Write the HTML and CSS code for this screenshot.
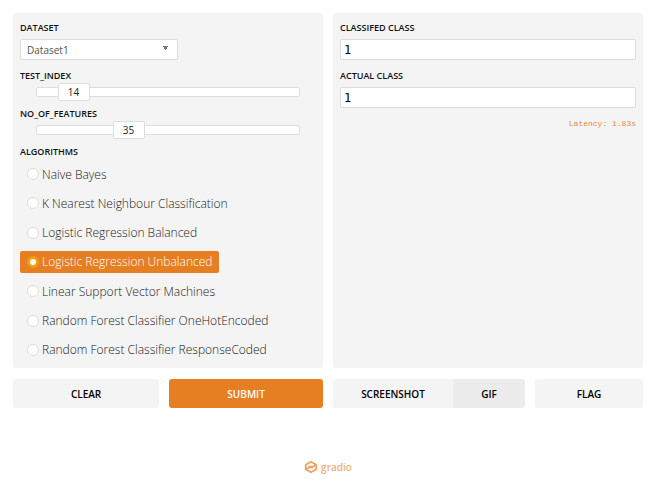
FILE: index.html
```html
<!DOCTYPE html>
<html lang="en">
<head>
<meta charset="utf-8">
<meta name="viewport" content="width=device-width, initial-scale=1">
<title>Gradio</title>
<link rel="stylesheet" href="styles.css">
</head>
<body>
<main class="interface">
  <form class="column" id="inputs">
    <div class="panel">
      <label class="label" for="dataset">DATASET</label>
      <select class="dropdown" id="dataset"><option>Dataset1</option></select>
      <label class="label" for="test-index">TEST_INDEX</label>
      <div class="slider">
        <input type="range" id="test-index" min="0" max="150" value="14">
        <output class="value" for="test-index" style="--ratio: 0.093">14</output>
      </div>
      <label class="label" for="features">NO_OF_FEATURES</label>
      <div class="slider">
        <input type="range" id="features" min="0" max="106" value="35">
        <output class="value" for="features" style="--ratio: 0.33">35</output>
      </div>
      <div class="label" id="algorithms">ALGORITHMS</div>
      <div class="options" role="radiogroup" aria-labelledby="algorithms">
        <label class="option"><input type="radio" name="algorithm">Naive Bayes</label>
        <label class="option"><input type="radio" name="algorithm">K Nearest Neighbour Classification</label>
        <label class="option"><input type="radio" name="algorithm">Logistic Regression Balanced</label>
        <label class="option"><input type="radio" name="algorithm" checked>Logistic Regression Unbalanced</label>
        <label class="option"><input type="radio" name="algorithm">Linear Support Vector Machines</label>
        <label class="option"><input type="radio" name="algorithm">Random Forest Classifier OneHotEncoded</label>
        <label class="option"><input type="radio" name="algorithm">Random Forest Classifier ResponseCoded</label>
      </div>
    </div>
    <div class="buttons">
      <button class="button clear" type="reset">CLEAR</button>
      <button class="button submit" type="button">SUBMIT</button>
    </div>
  </form>
  <section class="column">
    <div class="panel">
      <label class="label" for="classified">CLASSIFED CLASS</label>
      <input class="textbox" id="classified" type="text" value="1" readonly>
      <label class="label" for="actual">ACTUAL CLASS</label>
      <input class="textbox" id="actual" type="text" value="1" readonly>
      <p class="latency">Latency: 1.83s</p>
    </div>
    <div class="buttons">
      <div class="capture">
        <button class="button screenshot" type="button">SCREENSHOT</button>
        <button class="button gif" type="button">GIF</button>
      </div>
      <button class="button flag" type="button">FLAG</button>
    </div>
  </section>
</main>
<footer class="footer">
  <a class="brand" href="#">
    <svg class="logo" viewBox="0 0 24 24" aria-hidden="true">
      <path d="M3 16V8l9-5 9 5-9 5-4-2.500M21 8v8l-9 5-9-5 9-5 4 2.500"/>
    </svg>
    gradio
  </a>
</footer>
</body>
</html>
```

FILE: styles.css
```css
* {
  box-sizing: border-box;
}

body {
  margin: 0;
  padding: 13px 14px 13px 13px;
  background: #fff;
  color: #222;
  font-family: "Open Sans", sans-serif;
  font-size: 12px;
}

.interface {
  display: grid;
  grid-template-columns: 1fr 1fr;
  gap: 10px;
}

.column {
  display: flex;
  flex-direction: column;
  gap: 11px;
}

.panel {
  display: flex;
  flex: 1;
  flex-direction: column;
  min-height: 355px;
  padding: 8px 7px 7px;
  border-radius: 3px;
  background: #f4f4f4;
}

.label {
  margin-bottom: 4px;
  color: #111;
  font-size: 9px;
  font-weight: 600;
  line-height: 14px;
}

.dropdown {
  appearance: none;
  align-self: flex-start;
  width: 158px;
  height: 21px;
  margin-bottom: 9px;
  padding: 0 6px;
  border: 1px solid #ddd;
  border-radius: 2px;
  background: #fff conic-gradient(from -37deg at 50% 100%, #777 74deg, transparent 0) no-repeat right 9px top 6px / 5px 4px;
  color: #555;
  font: 10px "Open Sans", sans-serif;
}

.slider {
  position: relative;
  height: 18px;
  margin: -4px 16px 6px;
}

.slider input {
  appearance: none;
  display: block;
  width: 100%;
  height: 18px;
  margin: 0;
  background: none;
}

.slider input::-webkit-slider-runnable-track {
  height: 10px;
  border: 1px solid #ddd;
  border-radius: 2px;
  background: #fff;
}

.slider input::-webkit-slider-thumb {
  appearance: none;
  width: 32px;
  height: 18px;
  margin-top: -5px;
  border: 1px solid #ddd;
  border-radius: 2px;
  background: #fff;
}

.value {
  position: absolute;
  top: 0;
  left: calc((100% - 32px) * var(--ratio));
  width: 32px;
  font-size: 10px;
  line-height: 18px;
  text-align: center;
  pointer-events: none;
}

.options {
  display: flex;
  flex: 1;
  flex-direction: column;
  align-items: flex-start;
  justify-content: space-between;
}

.option {
  display: flex;
  align-items: center;
  gap: 3px;
  height: 22px;
  padding: 0 7px;
  border-radius: 2px;
  font-weight: 300;
  white-space: nowrap;
}

.option:has(input:checked) {
  background: #e67e22;
  color: #fff;
}

.option input {
  appearance: none;
  width: 12px;
  height: 12px;
  margin: 0;
  border: 1px solid #ddd;
  border-radius: 50%;
  background: #fff;
}

.option input:checked {
  border: 3px solid #f39c12;
}

.textbox {
  width: 100%;
  height: 21px;
  margin-bottom: 9px;
  padding: 0 3px;
  border: 1px solid #ddd;
  border-radius: 1px;
  background: #fff;
  color: #000;
  font: 12px "DejaVu Sans Mono", monospace;
}

.latency {
  margin: 0;
  color: #e08a4a;
  font: 8px/14px "Liberation Mono", monospace;
  text-align: right;
}

.buttons {
  display: flex;
  gap: 10px;
}

.button {
  flex: 1 1 0;
  height: 29px;
  padding: 0;
  border: 0;
  border-radius: 3px;
  background: #f4f4f4;
  color: #000;
  font: 600 10px "Open Sans", sans-serif;
}

.clear {
  flex-grow: 19;
}

.submit {
  flex-grow: 20;
  background: #e67e22;
  color: #fff;
}

.capture {
  display: flex;
  flex: 16 1 0;
  overflow: hidden;
  border-radius: 3px;
}

.screenshot {
  flex-grow: 5;
  border-radius: 0;
}

.gif {
  flex-grow: 3;
  border-radius: 0;
  background: #ececec;
}

.flag {
  flex-grow: 9;
}

.footer {
  display: flex;
  justify-content: center;
  margin-top: 51px;
}

.brand {
  display: flex;
  align-items: center;
  gap: 3px;
  color: #eeb080;
  font-size: 10px;
  font-weight: 600;
  line-height: 16px;
  text-decoration: none;
}

.logo {
  width: 14px;
  height: 14px;
  fill: none;
  stroke: #eda260;
  stroke-width: 3;
  stroke-linejoin: round;
}
```
